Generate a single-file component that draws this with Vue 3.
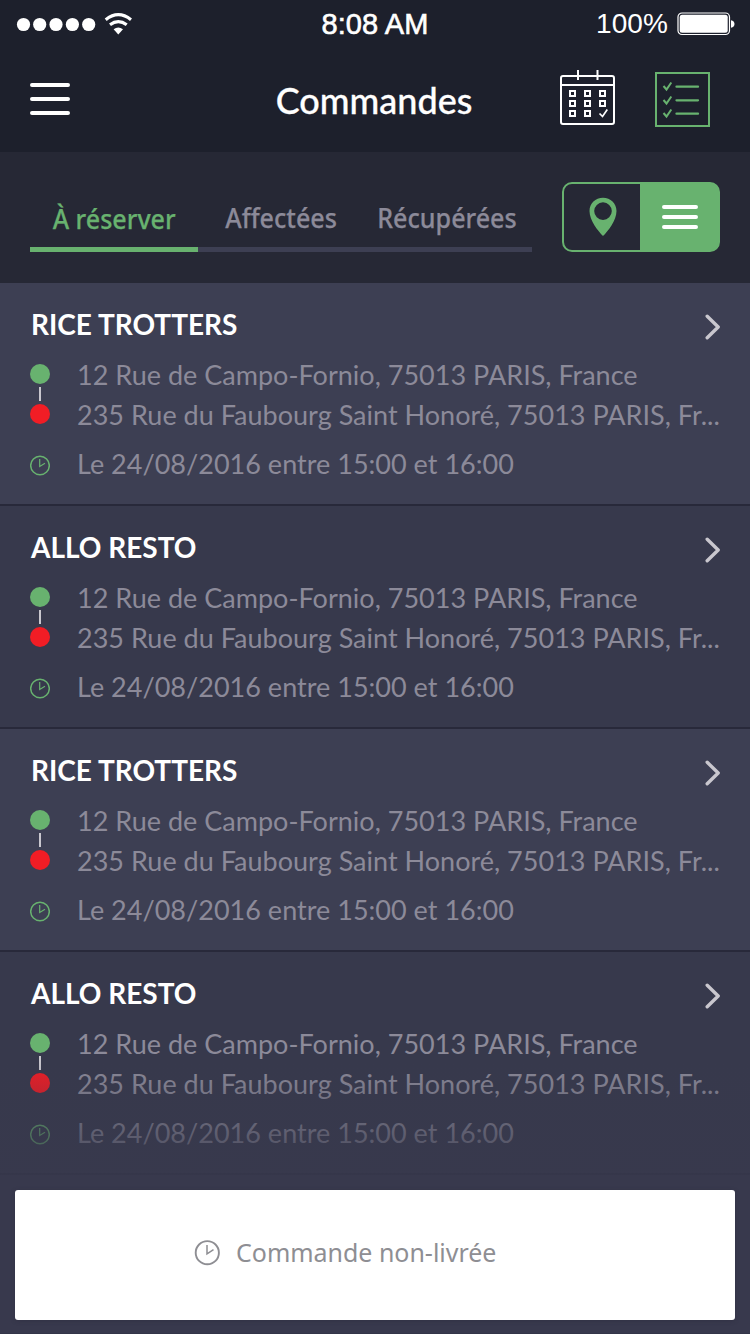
<script setup>
const places = {
  from: '12 Rue de Campo-Fornio, 75013 PARIS, France',
  to: '235 Rue du Faubourg Saint Honoré, 75013 PARIS, Fr...',
  when: 'Le 24/08/2016 entre 15:00 et 16:00'
}
const orders = [
  { id: 1, name: 'RICE TROTTERS', ...places },
  { id: 2, name: 'ALLO RESTO', ...places },
  { id: 3, name: 'RICE TROTTERS', ...places },
  { id: 4, name: 'ALLO RESTO', ...places }
]
</script>

<template>
  <div class="screen">
    <header class="top">
      <div class="status">
        <svg class="signal" width="120" height="28" viewBox="0 0 120 28">
          <g fill="#fff">
            <circle cx="7.500" cy="14.500" r="6.600" /><circle cx="23.700" cy="14.500" r="6.600" />
            <circle cx="40" cy="14.500" r="6.600" /><circle cx="56.400" cy="14.500" r="6.600" />
            <circle cx="72.700" cy="14.500" r="6.600" />
            <path d="M102.300 24.500L97.600 19.300Q102.300 15.600 107 19.300Z" />
          </g>
          <g fill="none" stroke="#fff" stroke-width="3.200">
            <path d="M89.700 9.700Q102.300 -0.300 115 9.700" />
            <path d="M94 14.800Q102.300 8.600 110.700 14.800" />
          </g>
        </svg>
        <span class="clock">8:08 AM</span>
        <div class="power">
          <span class="percent">100%</span>
          <svg width="59" height="24" viewBox="0 0 59 24">
            <rect x="1" y="1" width="51.500" height="21.500" rx="4" fill="none" stroke="#fff" stroke-width="1.200" />
            <rect x="2.700" y="2.700" width="48" height="18" rx="2.500" fill="#fff" />
            <path d="M54 8.200Q57.500 9 57.500 12T54 15.800Z" fill="#fff" />
          </svg>
        </div>
      </div>
      <div class="bar">
        <svg class="burger" width="40" height="32" viewBox="0 0 40 32">
          <path d="M2 2H38M2 16H38M2 30H38" stroke="#fff" stroke-width="4" stroke-linecap="round" />
        </svg>
        <h1>Commandes</h1>
        <div class="modes">
          <svg width="55" height="55" viewBox="0 0 55 55" fill="none" stroke="#fff" stroke-width="2">
            <rect x="1" y="6" width="53" height="48" rx="2" />
            <path d="M1 15H54M18 0V10M37.500 0V10" />
            <path d="M10 21h5v5h-5zM25 21h5v5h-5zM40 21h5v5h-5zM10 31h5v5h-5zM25 31h5v5h-5zM40 31h5v5h-5zM10 41h5v5h-5zM25 41h5v5h-5z" />
            <path d="M39.500 43.500L42.500 46.500L47.300 39.500" stroke-width="1.700" />
          </svg>
          <svg width="55" height="55" viewBox="0 0 55 55" fill="none" stroke="#68b26f" stroke-width="2">
            <rect x="1" y="1" width="53" height="53" />
            <path d="M21.500 14.700H43M21.500 28.300H43M21.500 41.700H43" stroke-width="2.300" stroke-linecap="round" />
            <path d="M8.500 14L11.500 17.500L16.300 10.500M8.500 28L11.500 31.500L16.300 24.500M8.500 41L11.500 44.500L16.300 37.500" stroke-width="2" />
          </svg>
        </div>
      </div>
    </header>

    <section class="filters">
      <nav class="tabs">
        <span class="tab active"><b>À réserver</b></span>
        <span class="tab"><b>Affectées</b></span>
        <span class="tab"><b>Récupérées</b></span>
      </nav>
      <div class="toggle">
        <div class="half">
          <svg width="28" height="40" viewBox="0 0 28 40">
            <path fill="#68b26f" fill-rule="evenodd" d="M14 0.700C6.400 0.700 0.500 6.500 0.500 14C0.500 23.500 9 34 14 39C19 34 27.500 23.500 27.500 14C27.500 6.500 21.600 0.700 14 0.700ZM14 5.300A8.800 8.800 0 1 1 14 22.900A8.800 8.800 0 1 1 14 5.300Z" />
          </svg>
        </div>
        <div class="half on">
          <svg width="36" height="24" viewBox="0 0 36 24">
            <path d="M2 2H34M2 12H34M2 22H34" stroke="#fff" stroke-width="4" stroke-linecap="round" />
          </svg>
        </div>
      </div>
    </section>

    <main class="list">
      <article v-for="order in orders" :key="order.id" class="order">
        <div class="head">
          <h2>{{ order.name }}</h2>
          <svg class="chevron" width="16" height="26" viewBox="0 0 16 26">
            <path d="M3.200 2.300L14.200 13L3.200 23.700" fill="none" stroke="#c9c7ce" stroke-width="3.400" stroke-linecap="round" stroke-linejoin="round" />
          </svg>
        </div>
        <div class="route">
          <svg width="20" height="60" viewBox="0 0 20 60">
            <circle cx="10" cy="10" r="10" fill="#68b26f" />
            <path d="M10 23V37" stroke="#c9c7ce" stroke-width="2" />
            <circle cx="10" cy="50" r="10" fill="#f11d25" />
          </svg>
          <div class="stops">
            <p class="from">{{ order.from }}</p>
            <p class="to">{{ order.to }}</p>
          </div>
        </div>
        <div class="time">
          <svg width="20" height="21" viewBox="0 0 20 21" fill="none" stroke="#68b26f">
            <circle cx="10" cy="10.500" r="9.300" stroke-width="1.500" />
            <path d="M9.700 4V11.500L15 8.300" stroke-width="1.200" />
          </svg>
          <p class="when">{{ order.when }}</p>
        </div>
      </article>
    </main>

    <footer class="overlay">
      <div class="fade"></div>
      <div class="dock">
        <button class="undelivered">
          <svg width="26" height="26" viewBox="0 0 26 26" fill="none" stroke="#8e8e93">
            <circle cx="13.300" cy="12.700" r="11.600" stroke-width="1.900" />
            <path d="M13 5V13.800L19.500 9.600" stroke-width="1.500" />
          </svg>
          <span>Commande non-livrée</span>
        </button>
      </div>
    </footer>
  </div>
</template>

<style>
body { background: #38394d; }
</style>

<style scoped>
.screen { position: relative; width: 750px; height: 1334px; overflow: hidden; background: #38394d; font-family: Lato, sans-serif; }
h1, h2, p { margin: 0; font-weight: 400; white-space: nowrap; }
svg { display: block; flex: none; }
.top { height: 152px; background: #1d202c; color: #fff; }
.status { display: grid; grid-template-columns: 250px 250px 250px; height: 48px; align-items: center; font-family: "Liberation Sans", Arial, sans-serif; }
.signal { margin-left: 16px; margin-top: -1px; }
.clock { text-align: center; font-size: 29px; line-height: 48px; -webkit-text-stroke: 0.6px #fff; letter-spacing: 0.1px; }
.power { display: flex; align-items: center; justify-content: flex-end; gap: 9px; padding-right: 14px; }
.percent { font-size: 28px; letter-spacing: 0.1px; }
.bar { display: grid; grid-template-columns: 245px 258px 1fr; height: 104px; }
.burger { margin: 35px 0 0 30px; }
h1 { text-align: center; font-size: 36px; font-weight: 500; line-height: 104px; -webkit-text-stroke: 0.3px #fff; }
.modes { display: flex; justify-content: flex-end; gap: 40px; padding: 24px 40px 0 0; }
.modes svg:first-child { margin-top: -2px; }
.filters { display: flex; justify-content: space-between; height: 131px; padding: 30px 30px 0; box-sizing: border-box; background: #262835; }
.tabs { display: grid; grid-template-columns: 168px 167px 167px; height: 70px; }
.tab { display: flex; justify-content: center; height: 70px; box-sizing: border-box; border-bottom: 5px solid #3d3f53; color: #8c8a99; font: 500 27px/71px "Noto Sans", sans-serif; }
.tab b { height: 65px; font-weight: 500; white-space: nowrap; transform: scaleX(0.93); -webkit-text-stroke: 0.25px currentColor; }
.tab:last-child { padding-right: 4px; }
.tab.active { color: #68b26f; border-color: #68b26f; line-height: 73px; }
.toggle { display: flex; width: 158px; height: 70px; box-sizing: border-box; border: 2px solid #68b26f; border-radius: 10px; overflow: hidden; background: linear-gradient(90deg, transparent 50%, #68b26f 50%) border-box; }
.half { display: flex; align-items: center; justify-content: center; width: 76px; }
.half svg { margin-left: 1px; }
.on { width: 78px; background: #68b26f; }
.on svg { margin: 0 0 0 2px; }
.order { height: 223px; box-sizing: border-box; padding: 0 30px; border-bottom: 2px solid #28293a; background: #3d3f53; }
.order:nth-child(even) { background: #37394c; }
.head { display: flex; justify-content: space-between; height: 81px; color: #fff; }
h2 { padding-left: 1px; font-size: 28px; font-weight: 700; line-height: 82px; }
.chevron { margin-top: 31px; }
.route, .time { display: flex; gap: 27px; color: #8c8a99; font-size: 27px; letter-spacing: 0.015px; }
.route { height: 70px; }
.route p { line-height: 40px; }
.stops { margin-top: -9px; }
.time { height: 60px; }
.time svg { margin-top: 21px; }
.when { line-height: 60px; }
.overlay { position: absolute; left: 0; right: 0; bottom: 0; height: 274px; }
.fade { height: 115px; background: linear-gradient(#38394d00, #38394dd9); }
.dock { height: 159px; padding: 15px 15px 0; box-sizing: border-box; border-bottom: 1px solid #333548; }
.undelivered { display: flex; align-items: center; gap: 16px; width: 720px; height: 130px; padding: 0 0 4px 179px; border: 0; border-radius: 3px; box-sizing: border-box; background: #fff; box-shadow: 0 1px 4px #28293a66; color: #8e8e93; font: 26px "Noto Sans", sans-serif; }
.undelivered span { transform: translateY(-1px) scaleX(0.96); transform-origin: left; }
</style>
